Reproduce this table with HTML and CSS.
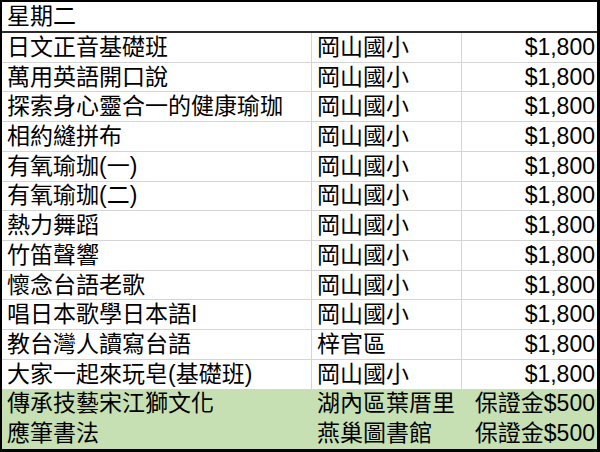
FILE: index.html
```html
<!DOCTYPE html>
<html lang="zh-Hant">
<head>
<meta charset="utf-8">
<title>星期二</title>
<link rel="stylesheet" href="styles.css">
</head>
<body>
<div class="sheet">
  <div class="title">星期二</div>
  <div class="rows">
    <div class="cell">日文正音基礎班</div><div class="cell">岡山國小</div><div class="cell num">$1,800</div>
    <div class="cell">萬用英語開口說</div><div class="cell">岡山國小</div><div class="cell num">$1,800</div>
    <div class="cell">探索身心靈合一的健康瑜珈</div><div class="cell">岡山國小</div><div class="cell num">$1,800</div>
    <div class="cell">相約縫拼布</div><div class="cell">岡山國小</div><div class="cell num">$1,800</div>
    <div class="cell">有氧瑜珈(一)</div><div class="cell">岡山國小</div><div class="cell num">$1,800</div>
    <div class="cell">有氧瑜珈(二)</div><div class="cell">岡山國小</div><div class="cell num">$1,800</div>
    <div class="cell">熱力舞蹈</div><div class="cell">岡山國小</div><div class="cell num">$1,800</div>
    <div class="cell">竹笛聲響</div><div class="cell">岡山國小</div><div class="cell num">$1,800</div>
    <div class="cell">懷念台語老歌</div><div class="cell">岡山國小</div><div class="cell num">$1,800</div>
    <div class="cell">唱日本歌學日本語I</div><div class="cell">岡山國小</div><div class="cell num">$1,800</div>
    <div class="cell">教台灣人讀寫台語</div><div class="cell">梓官區</div><div class="cell num">$1,800</div>
    <div class="cell">大家一起來玩皂(基礎班)</div><div class="cell">岡山國小</div><div class="cell num">$1,800</div>
    <div class="cell green">傳承技藝宋江獅文化</div><div class="cell green">湖內區葉厝里</div><div class="cell num green">保證金$500</div>
    <div class="cell green">應筆書法</div><div class="cell green">燕巢圖書館</div><div class="cell num green">保證金$500</div>
  </div>
</div>
</body>
</html>
```
FILE: styles.css
```css
html, body {
  margin: 0;
  padding: 0;
  background: #ffffff;
}

.sheet {
  box-sizing: border-box;
  width: 600px;
  height: 452px;
  border-style: solid;
  border-color: #000000;
  border-width: 2px 3px 3px 2px;
  display: flex;
  flex-direction: column;
  font-family: "Liberation Sans", "Noto Sans CJK TC", sans-serif;
  font-size: 23px;
  line-height: 1;
  color: #000000;
  overflow: hidden;
}

.title {
  height: 29px;
  flex: none;
  border-bottom: 2px solid #2b2b2b;
  padding-left: 5px;
  display: flex;
  align-items: center;
}

.rows {
  flex: 1 1 0;
  min-height: 0;
  display: grid;
  grid-template-columns: 310px 150px 1fr;
  grid-template-rows: repeat(14, minmax(0, 1fr));
}

.cell {
  box-sizing: border-box;
  min-height: 0;
  border-right: 1px solid #d4d4d4;
  border-bottom: 1px solid #d4d4d4;
  padding-left: 5px;
  display: flex;
  align-items: center;
  white-space: nowrap;
  overflow: hidden;
}

.num {
  justify-content: flex-end;
  padding-left: 0;
  padding-right: 2px;
  border-right: none;
}

.green {
  background: #c6e0b4;
  border-color: transparent;
}
```
